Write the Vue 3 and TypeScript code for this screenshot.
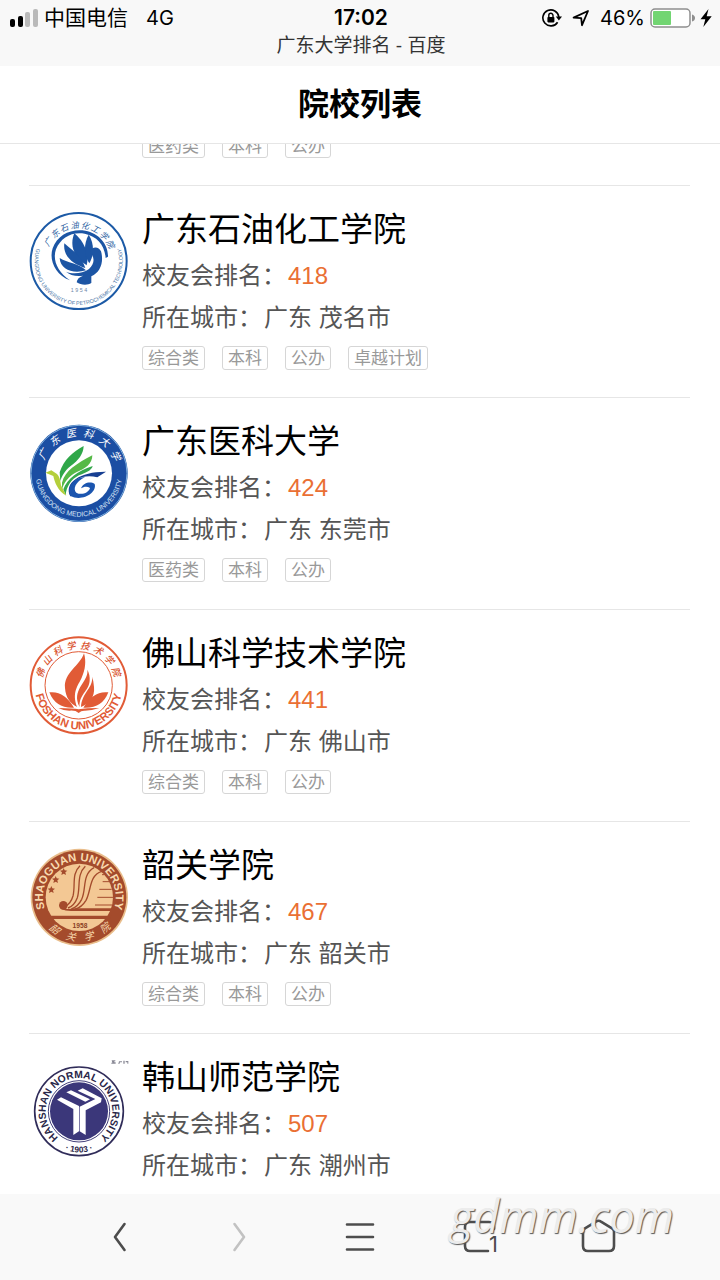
<script setup lang="ts">
type LogoKind = 'petro' | 'medical' | 'foshan' | 'shaoguan' | 'hanshan'

interface School {
  name: string
  rank: number
  city: string
  logo: LogoKind
  tags: string[]
}

interface RingGlyph {
  char: string
  angle: number
}

const previousTags: string[] = ['医药类', '本科', '公办']

const schools: School[] = [
  { name: '广东石油化工学院', rank: 418, city: '广东 茂名市', logo: 'petro', tags: ['综合类', '本科', '公办', '卓越计划'] },
  { name: '广东医科大学', rank: 424, city: '广东 东莞市', logo: 'medical', tags: ['医药类', '本科', '公办'] },
  { name: '佛山科学技术学院', rank: 441, city: '广东 佛山市', logo: 'foshan', tags: ['综合类', '本科', '公办'] },
  { name: '韶关学院', rank: 467, city: '广东 韶关市', logo: 'shaoguan', tags: ['综合类', '本科', '公办'] },
  { name: '韩山师范学院', rank: 507, city: '广东 潮州市', logo: 'hanshan', tags: [] },
]

// Spreads characters evenly over an arc; angles are degrees from the vertical.
function ring(text: string, from: number, to: number): RingGlyph[] {
  const chars = [...text]
  return chars.map((char, i) => ({ char, angle: from + ((to - from) * i) / (chars.length - 1) }))
}

const petroRing = ring('广东石油化工学院', -58, 62)
const medicalRing = ring('广东医科大学', -62, 64)
const foshanRing = ring('佛山科学技术学院', -72, 70)
const shaoguanRing = ring('韶关学院', 38, -40)
</script>

<template>
  <div class="screen">
    <header class="status">
      <div class="status-row">
        <div class="status-left">
          <svg class="signal" viewBox="0 0 28 18" aria-hidden="true">
            <rect x="0" y="10" width="5" height="8" rx="2" fill="#000" />
            <rect x="8" y="7" width="5" height="11" rx="2" fill="#000" />
            <rect x="15" y="3" width="5" height="15" rx="2" fill="#bababa" />
            <rect x="23" y="0" width="5" height="18" rx="2" fill="#bababa" />
          </svg>
          <span class="carrier">中国电信</span>
          <span class="network">4G</span>
        </div>
        <time class="clock">17:02</time>
        <div class="status-right">
          <svg class="lock" viewBox="0 0 20 18" aria-hidden="true">
            <path d="M15.6 13.2A8 8 0 1 1 16.8 8" fill="none" stroke="#000" stroke-width="1.6" />
            <path d="M13.8 7.6h6.2l-3.1 4z" fill="#000" />
            <rect x="5.4" y="8" width="7" height="5.4" rx="0.8" fill="#000" />
            <path d="M6.8 8.4V6.4a2.1 2.1 0 0 1 4.2 0v2" fill="none" stroke="#000" stroke-width="1.4" />
          </svg>
          <svg class="arrow" viewBox="0 0 18 18" aria-hidden="true">
            <path d="M1.6 8.6L16 2l-6 14.2-.8-7z" fill="none" stroke="#000" stroke-width="1.8" stroke-linejoin="round" />
          </svg>
          <span class="percent">46%</span>
          <svg class="battery" viewBox="0 0 46 20" aria-hidden="true">
            <rect x="1" y="1" width="39" height="18" rx="4" fill="#fff" stroke="#8e8e8e" stroke-width="1.5" />
            <rect x="3" y="3" width="18" height="14" rx="1" fill="#72d572" />
            <path d="M42 6.500q3 1 3 3.500t-3 3.500z" fill="#8e8e8e" />
          </svg>
          <svg class="bolt" viewBox="0 0 12 18" aria-hidden="true">
            <path d="M8.500 0L0.500 10.300h4.800L3.300 18 11.700 7.300H6.700z" fill="#000" />
          </svg>
        </div>
      </div>
      <p class="page-title">广东大学排名 - 百度</p>
    </header>

    <h1 class="heading">院校列表</h1>

    <main class="viewport">
      <div class="list">
        <div class="previous">
          <ul class="tags">
            <li v-for="tag in previousTags" :key="tag" class="tag">{{ tag }}</li>
          </ul>
        </div>

        <article v-for="school in schools" :key="school.name" class="school">
          <svg class="logo" viewBox="27 33 300 300" role="img" :aria-label="school.name">
            <g v-if="school.logo === 'petro'">
              <path id="petro-arc" d="M176 51A132 132 0 0 0 176 315A132 132 0 0 0 176 51" fill="none" />
              <circle cx="176" cy="183" r="144" fill="#fff" stroke="#1c5aa6" stroke-width="6" />
              <g fill="#2d5f9f" font-size="25" font-style="italic" text-anchor="middle">
                <text v-for="(g, i) in petroRing" :key="i" x="176" y="84" :transform="`rotate(${g.angle} 176 183)`">{{ g.char }}</text>
              </g>
              <text font-size="16" fill="#4672a5" text-anchor="middle">
                <textPath href="#petro-arc" startOffset="50%">GUANGDONG UNIVERSITY OF PETROCHEMICAL TECHNOLOGY</textPath>
              </text>
              <path d="M150 241C106 226 86 180 98 145C112 103 155 85 196 92C236 99 265 132 264 170L257 174C254 136 232 109 194 101C156 94 122 113 108 148C97 179 112 215 150 241Z" fill="#1c55a4" />
              <g fill="#1c55a4">
                <path d="M163 100C148 137 161 170 200 196C209 160 191 123 163 100Z" />
                <path d="M206 104C188 137 194 170 208 190C224 163 222 128 206 104Z" />
                <path d="M133 130C128 168 158 192 196 204C184 167 158 152 133 130Z" />
                <path d="M119 174C121 209 160 223 198 211C174 188 143 190 119 174Z" />
                <path d="M138 215C158 224 187 221 207 207C222 193 224 178 216 164L210 156C215 139 236 138 243 154C252 185 242 216 214 229V249C202 257 182 255 170 247C171 237 178 231 189 227C168 230 149 225 138 215Z" />
              </g>
              <text x="177" y="276" font-size="16" fill="#6b86a8" text-anchor="middle">1 9 5 4</text>
            </g>

            <g v-else-if="school.logo === 'medical'">
              <path id="medical-arc" d="M177 54A130 130 0 0 0 177 314A130 130 0 0 0 177 54" fill="none" />
              <circle cx="177" cy="184" r="146" fill="#1b4ea3" />
              <circle cx="177" cy="184" r="144" fill="none" stroke="#7fb0dd" stroke-width="3" />
              <circle cx="177" cy="184" r="99" fill="#fff" />
              <g fill="#fff" font-size="31" font-style="italic" text-anchor="middle">
                <text v-for="(g, i) in medicalRing" :key="i" x="177" y="73" :transform="`rotate(${g.angle} 177 184)`">{{ g.char }}</text>
              </g>
              <text font-size="21" fill="#d5e4f6" text-anchor="middle">
                <textPath href="#medical-arc" startOffset="50%">GUANGDONG MEDICAL UNIVERSITY</textPath>
              </text>
              <path d="M119 181C132 142 159 119 191 102C190 126 176 145 151 163C136 175 124 194 121 208Z" fill="#2fa749" />
              <path d="M126 212C135 176 170 155 217 130C217 156 196 170 169 181C147 191 131 214 126 232Z" fill="#56b947" />
              <path d="M130 232C143 198 172 178 218 162C215 176 195 183 177 190C153 202 139 224 137 250Z" fill="#37a84d" />
              <path d="M76 182L94 175L111 186C117 191 121 202 123 220L139 251C113 237 104 210 100 192Z" fill="#b4cf3b" />
              <path d="M151 253C130 211 183 178 258 179L232 196C190 186 160 203 156 224Q154 240 167 248Z" fill="#173f92" />
              <path d="M151 252C139 219 165 197 195 195C166 210 158 231 169 242C184 251 207 242 210 228C202 222 192 223 183 229C190 212 211 207 224 216C232 242 187 270 151 252Z" fill="#1b55af" />
            </g>

            <g v-else-if="school.logo === 'foshan'">
              <path id="foshan-arc" d="M176 52A132 132 0 0 0 176 316A132 132 0 0 0 176 52" fill="none" />
              <circle cx="176" cy="184" r="144" fill="#fff" stroke="#e15b36" stroke-width="6" />
              <circle cx="176" cy="184" r="101" fill="none" stroke="#e15b36" stroke-width="3" />
              <g fill="#d9532f" font-size="28" font-style="italic" font-weight="500" text-anchor="middle">
                <text v-for="(g, i) in foshanRing" :key="i" x="176" y="74" :transform="`rotate(${g.angle} 176 184)`">{{ g.char }}</text>
              </g>
              <text font-size="34" font-weight="700" fill="#e15b36" text-anchor="middle">
                <textPath href="#foshan-arc" startOffset="50%">FOSHAN UNIVERSITY</textPath>
              </text>
              <g fill="#e15b36">
                <path d="M192 88C180 126 131 145 135 192C137 221 151 239 171 249C155 204 174 185 185 161C196 137 199 111 192 88Z" />
                <path d="M202 137C207 168 166 188 172 230Q174 242 179 249C176 211 207 201 209 170Q210 151 202 137Z" />
                <path d="M216 158C221 190 185 206 183 249C209 239 225 218 222 189Q221 170 216 158Z" />
                <path d="M88 205Q132 199 162 251Q107 254 88 205Z" />
                <path d="M265 205Q220 199 190 251Q247 254 265 205Z" />
                <path d="M115 252Q160 253 176 256Q199 252 238 252Q215 260 195 260Q184 259 176 267Q166 258 148 260Q130 260 115 252Z" />
              </g>
            </g>

            <g v-else-if="school.logo === 'shaoguan'">
              <path id="shaoguan-arc" d="M178 293A109 109 0 0 1 178 75A109 109 0 0 1 178 293" fill="none" />
              <circle cx="178" cy="184" r="146" fill="#e9bd8b" />
              <circle cx="178" cy="184" r="141" fill="#a44b2c" />
              <circle cx="178" cy="184" r="101" fill="#f3c894" />
              <text font-size="34" font-weight="700" fill="#f8d9ae" text-anchor="middle">
                <textPath href="#shaoguan-arc" startOffset="50%">SHAOGUAN UNIVERSITY</textPath>
              </text>
              <g fill="#f8d9ae" font-size="30" font-style="italic" text-anchor="middle">
                <text v-for="(g, i) in shaoguanRing" :key="i" x="178" y="315" :transform="`rotate(${g.angle} 178 184)`">{{ g.char }}</text>
              </g>
              <g fill="#a44b2c">
                <path id="star" d="M131 96l3 7 8 1-6 5 2 8-7-4-7 4 2-8-6-5 8-1z" />
                <use href="#star" x="-24" y="24" />
                <use href="#star" x="-37" y="54" />
                <path d="M82 239H274L271 249H85Z" />
                <circle cx="130" cy="208" r="13" />
                <path d="M124 216C139 221 152 219 165 217H276V225H153C141 225 132 223 124 219Z" />
              </g>
              <g fill="none" stroke="#a44b2c" stroke-width="4">
                <path d="M180 89C154 113 167 148 159 180Q152 204 135 211" />
                <path d="M196 91C169 116 182 153 172 185Q163 209 144 216" />
                <path d="M222 95C185 116 200 158 185 190Q174 212 154 219" />
                <path d="M245 106C207 118 214 164 198 193Q185 214 166 219" />
              </g>
              <path d="M246 116H252M248 137H267M238 160H275M232 184H279M225 207H277" stroke="#a44b2c" stroke-width="3" />
              <text x="180" y="276" font-size="20" font-weight="700" fill="#8b3f25" text-anchor="middle">1958</text>
            </g>

            <g v-else>
              <path id="hanshan-arc" d="M177 290A100 100 0 0 1 177 90A100 100 0 0 1 177 290" fill="none" />
              <path id="hanshan-year" d="M177 67A123 123 0 0 0 177 313A123 123 0 0 0 177 67" fill="none" />
              <circle cx="177" cy="190" r="133" fill="#fff" stroke="#302c59" stroke-width="5" />
              <circle cx="177" cy="190" r="92" fill="#fff" stroke="#45417b" stroke-width="3" />
              <circle cx="177" cy="190" r="87" fill="#3b377a" />
              <text font-size="31" font-weight="700" fill="#292648" text-anchor="middle">
                <textPath href="#hanshan-arc" startOffset="50%">HANSHAN NORMAL UNIVERSITY</textPath>
              </text>
              <text font-size="25" font-weight="700" fill="#292648" text-anchor="middle">
                <textPath href="#hanshan-year" startOffset="50%">· 1903 ·</textPath>
              </text>
              <g fill="#fff">
                <path d="M111 155L123 148L177 174V250L160 261V183Z" />
                <path d="M139 133L153 127L210 154L196 161Z" />
                <path d="M173 128L188 121L245 151L243 163L197 187V261L179 250V176L226 153Z" />
              </g>
              <path d="M275 37h11v3h-3v3h4v4h-13v-3h3zM297 40h9v3h-6l-2 5h-3zM310 38h4v9h-4zM317 39h8v8h-3v-4h-5z" fill="#8a8a96" />
            </g>
          </svg>

          <div class="info">
            <h2 class="name">{{ school.name }}</h2>
            <p class="meta"><span>校友会排名：</span><span class="rank">{{ school.rank }}</span></p>
            <p class="meta"><span>所在城市：</span><span>{{ school.city }}</span></p>
            <ul v-if="school.tags.length" class="tags">
              <li v-for="tag in school.tags" :key="tag" class="tag">{{ tag }}</li>
            </ul>
          </div>
        </article>
      </div>
    </main>

    <nav class="toolbar">
      <button type="button" class="tool" aria-label="后退">
        <svg viewBox="0 0 40 40"><path d="M24.500 7L15 20l9.500 13" /></svg>
      </button>
      <button type="button" class="tool" aria-label="前进" disabled>
        <svg viewBox="0 0 40 40"><path d="M14.500 7L24 20l-9.500 13" /></svg>
      </button>
      <button type="button" class="tool" aria-label="菜单">
        <svg viewBox="0 0 40 40"><path d="M7 7.500h26M7 20h26M7 32.500h26" /></svg>
      </button>
      <button type="button" class="tool" aria-label="标签页">
        <svg viewBox="0 0 40 40">
          <path d="M28 34H10q-5 0-5-5V10q0-5 5-5h19q5 0 5 5v2" />
          <text x="29" y="35">1</text>
        </svg>
      </button>
      <button type="button" class="tool" aria-label="主页">
        <svg viewBox="0 0 40 40"><path d="M3 14.500Q3 12.500 5 11.300L16 4.600Q18.500 3 21 4.600L32 11.300Q34 12.500 34 14.500V29q0 5-5 5H8q-5 0-5-5z" /></svg>
      </button>
      <span class="watermark">gdmm.com</span>
    </nav>
  </div>
</template>

<style>
html,
body {
  margin: 0;
  background: #fff;
}
</style>

<style scoped>
.screen {
  display: flex;
  flex-direction: column;
  height: 100vh;
  overflow: hidden;
  background: #fff;
  color: #000;
  font-family: "Liberation Sans", "Noto Sans CJK SC", sans-serif;
}

.status {
  flex: none;
  padding: 4px 8px 6px 10px;
  background: #f8f8f8;
}

.status-row {
  display: grid;
  grid-template-columns: 1fr auto 1fr;
  align-items: center;
  height: 28px;
  font-family: Inter, "Noto Sans CJK SC", sans-serif;
  font-size: 20px;
  line-height: 28px;
}

.status-left,
.status-right {
  display: flex;
  align-items: center;
}

.status-right {
  justify-content: flex-end;
}

.signal {
  width: 28px;
  height: 18px;
}

.carrier {
  margin-left: 6px;
  font-size: 21px;
}

.network {
  margin-left: 18px;
}

.clock {
  font-size: 21px;
  font-weight: 600;
}

.lock {
  width: 20px;
  height: 18px;
  margin-right: 10px;
}

.arrow {
  width: 18px;
  height: 18px;
  margin-right: 10px;
}

.percent {
  margin-right: 5px;
}

.battery {
  width: 46px;
  height: 20px;
  margin-right: 4px;
}

.bolt {
  width: 12px;
  height: 18px;
}

.page-title {
  margin: 0;
  color: #333;
  font-size: 19px;
  line-height: 28px;
  text-align: center;
}

.heading {
  flex: none;
  margin: 0;
  border-bottom: 1px solid #e6e6e6;
  font-size: 31px;
  font-weight: 700;
  line-height: 77px;
  text-align: center;
}

.viewport {
  flex: 1;
  min-height: 0;
  overflow: hidden;
}

.list {
  margin-top: -10px;
  padding: 0 30px 0 29px;
}

.previous {
  padding: 0 0 27px 113px;
  border-bottom: 1px solid #e6e6e6;
}

.school {
  display: flex;
  gap: 13px;
  padding: 22px 0 27px;
  border-bottom: 1px solid #e6e6e6;
}

.school:last-child {
  border-bottom: 0;
}

.logo {
  flex: none;
  width: 100px;
  height: 100px;
  margin-top: 3px;
}

.info {
  flex: 1;
  min-width: 0;
}

.name {
  margin: 0 0 3px;
  font-size: 33px;
  font-weight: 400;
  line-height: 44px;
}

.meta {
  display: flex;
  gap: 2px;
  margin: 0;
  color: #555;
  font-size: 24px;
  line-height: 42px;
}

.rank {
  color: #ea6f33;
}

.tags {
  display: flex;
  gap: 17px;
  margin: 0;
  padding: 0;
  list-style: none;
}

.info .tags {
  margin-top: 7px;
}

.tag {
  padding: 2px 5px 0;
  border: 1px solid #d6d6d6;
  border-radius: 3px;
  color: #999;
  font-size: 17px;
  line-height: 20px;
}

.toolbar {
  position: relative;
  display: flex;
  flex: none;
  align-items: center;
  height: 86px;
  padding: 0 60px;
  background: #f9f9f9;
}

.tool {
  display: flex;
  flex: 1;
  justify-content: center;
  padding: 0;
  border: 0;
  background: none;
}

.tool svg {
  width: 40px;
  height: 40px;
  fill: none;
  stroke: #4d4d4d;
  stroke-width: 2.6;
  stroke-linecap: round;
  stroke-linejoin: round;
}

.tool:disabled svg {
  stroke: #c2c2c2;
}

.tool text {
  fill: #4d4d4d;
  stroke: none;
  font-family: Inter, sans-serif;
  font-size: 22px;
}

.watermark {
  position: absolute;
  top: 0;
  right: 46px;
  color: #ececec;
  font-family: "Open Sans", "Noto Sans", sans-serif;
  font-size: 45px;
  font-style: italic;
  line-height: 44px;
  text-shadow: 1px 1px 1px #555;
  pointer-events: none;
}
</style>
